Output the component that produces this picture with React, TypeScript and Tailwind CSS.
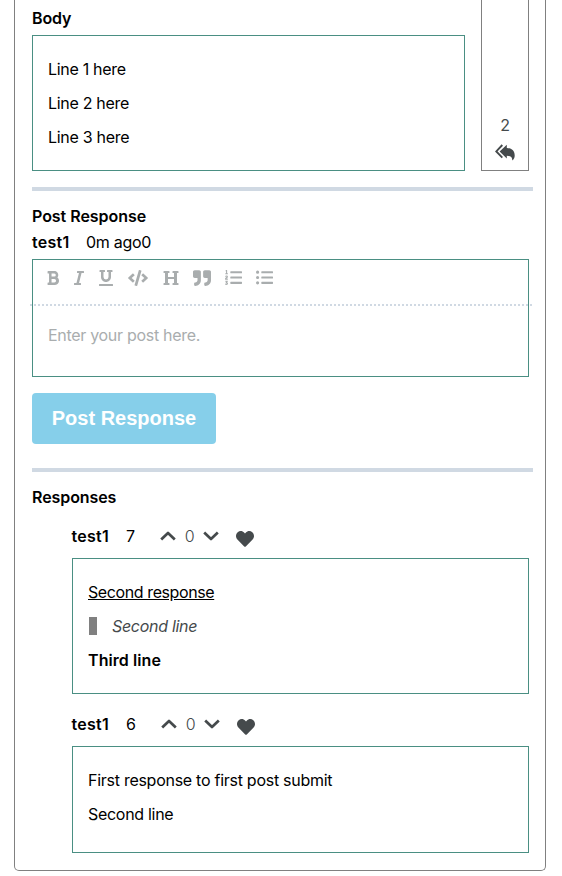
import React from "react";
import { FaBold, FaItalic, FaUnderline, FaCode, FaHeading, FaQuoteRight, FaListOl, FaListUl, FaHeart } from "react-icons/fa";

const rule = "h-1 w-[501px] bg-[#d0d9e3]";
const box = "border border-[#4a8f83] px-[15px] text-black";

function Chevron({ down = false }: { down?: boolean }) {
  return (
    <svg viewBox="0 0 16 10" className="h-[10px] w-4" fill="none" stroke="#454a4c" strokeWidth="2.7" strokeLinejoin="round">
      <path d={down ? "M1.200 1.500 8 8 14.800 1.500" : "M1.200 8.500 8 2 14.800 8.500"} />
    </svg>
  );
}

function ReplyAll() {
  return (
    <svg viewBox="0 0 20 17" className="mr-px h-[17px] w-5" fill="#454a4c">
      <path d="M11.800.800v3.200c4.900.2 7.900 3 7.900 7.400 0 2-.7 3.700-2.400 5.100.1-3.300-1.500-4.700-5.500-4.800V14.500L4.600 7.600z" />
      <path d="M7.300 1 1.300 7.400l6 6.200" fill="none" stroke="#454a4c" strokeWidth="1.900" />
      <path d="M10 1 3.500 7.500 10 14" fill="none" stroke="#fff" strokeWidth="0.700" />
    </svg>
  );
}

function ResponseHead({ id, shift = false }: { id: string; shift?: boolean }) {
  return (
    <div className="flex h-6 items-center">
      <span className="-ml-[0.5px] w-[54.5px] font-semibold tracking-[0.25px]">test1</span>
      <span className={shift ? "w-[35px]" : "w-[34px]"}>{id}</span>
      <Chevron />
      <span className="w-[27px] text-center font-light text-[#454a4c]">0</span>
      <Chevron down />
      <FaHeart className="mt-[5px] ml-[17px] h-[18px] w-[18px] text-[#454a4c]" />
    </div>
  );
}

export default function App() {
  return (
    <div className="h-[876px] w-[562px] overflow-hidden bg-white font-['Inter',sans-serif] text-[16px] leading-6 tracking-[-0.3px] text-black">
      <div className="ml-[14px] h-[871px] w-[532px] rounded-b-[5px] border border-t-0 border-[#808080] pl-[17px]">
        <div className="flex h-[171px] gap-4">
          <div className="w-[433px] pt-1.5">
            <div className="mb-[5px] font-semibold tracking-[-0.1px]">Body</div>
            <div className={`${box} h-[136px] pt-[21px]`}>
              <p className="mb-[10px]">Line 1 here</p>
              <p className="mb-[10px]">Line 2 here</p>
              <p>Line 3 here</p>
            </div>
          </div>
          <div className="flex w-12 flex-col items-center justify-end border border-t-0 border-[#808080] pb-[9px] text-[#454a4c]">
            <span className="mb-[7px]">2</span>
            <ReplyAll />
          </div>
        </div>
        <div className={`${rule} mt-4`} />
        <div className="mt-[13px] h-[26px] font-semibold tracking-[-0.04px]">Post Response</div>
        <div className="flex h-[29px]">
          <span className="w-[54px] font-semibold tracking-[0.25px]">test1</span>
          <span>0m ago0</span>
        </div>
        <div className="relative h-[118px] w-[497px] border border-[#4a8f83]">
          <div className="flex h-[35px] items-center pl-[12px] text-[16px] text-[#a9adae]">
            <FaBold className="w-4" />
            <FaItalic className="ml-[10px] w-4" />
            <FaUnderline className="ml-[11px] w-4" />
            <FaCode className="ml-[14px] h-4 w-5" />
            <FaHeading className="ml-[15px] w-4" />
            <FaQuoteRight className="ml-[14px] h-[18px] w-[18px]" />
            <FaListOl className="ml-[14px] h-[17px] w-[17px]" />
            <FaListUl className="ml-[14px] h-[17px] w-[17px]" />
          </div>
          <div className="absolute top-11 -left-[3px] w-[502px] border-t-2 border-dotted border-[#d0d9e3]" />
          <p className="mt-[28px] pl-[15px] text-[#a9adae]">Enter your post here.</p>
        </div>
        <button className="mt-4 block h-[51px] w-[184px] rounded-[4px] bg-[#86cfea] pb-0.5 font-['Liberation_Sans',sans-serif] text-[20px] font-bold tracking-normal text-white">Post Response</button>
        <div className={`${rule} mt-6`} />
        <div className="mt-[13px] font-semibold tracking-[-0.08px]">Responses</div>
        <div className="ml-10 w-[457px] pt-[15px]">
          <ResponseHead id="7" />
          <div className={`${box} mt-[10px] h-[136px] pt-[21px]`}>
            <p className="mb-[10px] tracking-[-0.4px] underline">Second response</p>
            <div className="mb-[10px] flex items-center text-[#454a4c]">
              <span className="mr-[15px] ml-px h-[18px] w-2 bg-[#808080]" />
              <em>Second line</em>
            </div>
            <p className="font-semibold tracking-[0.08px]">Third line</p>
          </div>
          <div className="h-[18px]" />
          <ResponseHead id="6" shift />
          <div className={`${box} mt-[10px] h-[107px] pt-[21px]`}>
            <p className="mb-[10px] tracking-[-0.27px]">First response to first post submit</p>
            <p>Second line</p>
          </div>
        </div>
      </div>
    </div>
  );
}
